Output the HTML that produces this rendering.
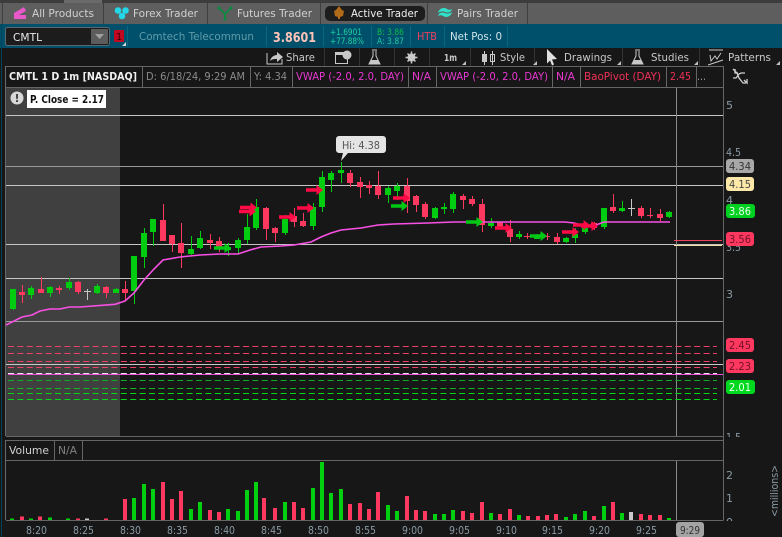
<!DOCTYPE html>
<html><head><meta charset="utf-8"><style>
html,body{margin:0;padding:0;background:#171717;overflow:hidden}
svg{display:block}
text{font-family:"DejaVu Sans","Liberation Sans",sans-serif;font-size:11px}
</style></head><body>
<svg width="782" height="537" viewBox="0 0 782 537" xmlns="http://www.w3.org/2000/svg">
<defs>
<path id="ar" d="M0 -1.700H10.500V-5L17 0L10.500 5V1.700H0z"/>
<clipPath id="c1"><rect x="724" y="425" width="30" height="12"/></clipPath>
<clipPath id="c2"><rect x="724" y="510" width="30" height="11"/></clipPath>
</defs>
<rect width="782" height="537" fill="#171717"/>
<!-- tabs -->
<rect width="782" height="24" fill="#5e5e5e"/>
<rect width="782" height="3" fill="#3c3c3c"/>
<rect x="64" width="38" height="3" fill="#6a6a6a"/>
<path d="M2.500 3V24M103.500 3V24M207.500 3V24M320.500 3V24M427.500 3V24M527.500 3V24" stroke="#3e3e3e"/>
<rect x="325" y="6" width="100" height="15" rx="5" fill="#1d1d1d"/>
<path d="M14 13l10-6 2 4-7 4h7v4H14z" fill="#e858c8"/>
<circle cx="118" cy="10.500" r="3.300" fill="#22d8e8"/><circle cx="125.500" cy="10.500" r="3.300" fill="#22d8e8"/><circle cx="122" cy="16" r="3.300" fill="#22d8e8"/>
<path d="M219 8l6 6 6-6M225 14v5" stroke="#0a8a40" stroke-width="1.800" fill="none"/><circle cx="219" cy="8" r="1.500" fill="#0a8a40"/><circle cx="231" cy="8" r="1.500" fill="#0a8a40"/><circle cx="225" cy="19" r="1.500" fill="#0a8a40"/>
<path d="M339 6l3 4 2 1-1 5-3 1v2h-2v-2l-3-1-1-5 2-1z" fill="#b06a18"/>
<path d="M438 13c1-5 6-6 9-4 2 1 3 1 5 0-1 4-5 4-7 3-2-1-4-1-7 1z" fill="#30e0c8"/><path d="M452 12c-1 5-6 6-9 4-2-1-3-1-5 0 1-4 5-4 7-3 2 1 4 1 7-1z" fill="#30e0c8"/>
<g fill="#d0d0d0">
<text x="32" y="17" textLength="62" lengthAdjust="spacingAndGlyphs">All Products</text>
<text x="133" y="17" textLength="65" lengthAdjust="spacingAndGlyphs">Forex Trader</text>
<text x="237" y="17" textLength="75" lengthAdjust="spacingAndGlyphs">Futures Trader</text>
<text x="351" y="17" textLength="67" lengthAdjust="spacingAndGlyphs" fill="#f0f0f0">Active Trader</text>
<text x="457" y="17" textLength="61" lengthAdjust="spacingAndGlyphs">Pairs Trader</text>
</g>
<!-- blue bar -->
<rect y="24" width="782" height="24" fill="#00506c"/>
<rect x="5.500" y="27.500" width="104" height="18" rx="2" fill="#1c1c1c" stroke="#5a6a70"/>
<rect x="91" y="29" width="17" height="15" fill="#5c5c5c"/>
<path d="M95 34h9l-4.500 5z" fill="#a0a0a0"/>
<text x="13" y="41" textLength="29" lengthAdjust="spacingAndGlyphs" fill="#e8e8e8">CMTL</text>
<rect x="114" y="30" width="10" height="12" rx="1" fill="#c00820"/>
<text x="116" y="40" style="font-size:10px" fill="#400008">1</text>
<path d="M122 46h4v-4z" fill="#d0d8dc"/>
<path d="M127.500 26V47M266.500 26V47M323.500 26V47M371.500 26V47M410.500 26V47M444.500 26V47M507.500 26V47" stroke="#0a6580"/>
<text x="139" y="40" textLength="115" lengthAdjust="spacingAndGlyphs" fill="#5f9ba8">Comtech Telecommun</text>
<text x="273" y="42" textLength="43" lengthAdjust="spacingAndGlyphs" style="font-size:13.500px;font-weight:bold" fill="#ffc4b8">3.8601</text>
<g style="fill:#1fd0a0">
<text x="330" y="35" textLength="32" lengthAdjust="spacingAndGlyphs" style="font-size:9px">+1.6901</text>
<text x="330" y="44" textLength="34" lengthAdjust="spacingAndGlyphs" style="font-size:9px">+77.88%</text>
</g>
<text x="377" y="35" textLength="27" lengthAdjust="spacingAndGlyphs" style="font-size:9px;fill:#10b848">B: 3.86</text>
<text x="377" y="44" textLength="27" lengthAdjust="spacingAndGlyphs" style="font-size:9px;fill:#20c8a0">A: 3.87</text>
<text x="417" y="40" textLength="20" lengthAdjust="spacingAndGlyphs" fill="#f04060">HTB</text>
<text x="450" y="40" textLength="52" lengthAdjust="spacingAndGlyphs" fill="#cfe4ea">Net Pos: 0</text>
<!-- toolbar -->
<path d="M324.500 48V66M359.500 48V66M394.500 48V66M429.500 48V66M470.500 48V66M534.500 48V66M622.500 48V66M699.500 48V66" stroke="#333"/>
<g fill="#c8c8c8">
<path d="M267 53v11h15v-5" stroke="#c8c8c8" fill="none"/><path d="M270 61c1-4 4-6 7-6v-3l6 5-6 5v-3c-3 0-5 0-7 2z"/>
<text x="286" y="61" textLength="29" lengthAdjust="spacingAndGlyphs">Share</text>
<path d="M335.500 52.500h12v11h-12z" stroke="#c8c8c8" fill="none"/><rect x="335" y="52" width="13" height="3"/><circle cx="347" cy="55" r="4.500"/>
<path d="M372 50h5M373 51v5l-4 8h11l-4-8v-5" stroke="#c8c8c8" fill="none"/><path d="M371 60h7l2 4h-11z"/>
<circle cx="411.500" cy="57.500" r="4"/><path d="M411.500 51.500v12M405.500 57.500h12M407.500 53.500l8 8M415.500 53.500l-8 8" stroke="#c8c8c8" stroke-width="1.500"/>
<text x="444" y="61" textLength="13" lengthAdjust="spacingAndGlyphs" style="font-weight:bold;font-size:9.500px">1m</text>
<path d="M462 65h4v-4zM533 65h4v-4zM617 65h4v-4zM694 65h4v-4zM776 65h4v-4z" fill="#c0c0c0"/>
<path d="M484.500 51v14M492.500 51v14" stroke="#c8c8c8"/><rect x="482" y="54" width="5" height="8"/><rect x="490.500" y="54.500" width="4" height="7" fill="none" stroke="#c8c8c8"/>
<text x="500" y="61" textLength="25" lengthAdjust="spacingAndGlyphs">Style</text>
<path d="M547 49l10 10-5 .5 2 5-2 1-2-5-3 3z" fill="#e0e0e0"/>
<text x="564" y="61" textLength="48" lengthAdjust="spacingAndGlyphs">Drawings</text>
<path d="M635 50h5M636 51v5l-4 8h11l-4-8v-5" stroke="#c8c8c8" fill="none"/><path d="M634 60h7l2 4h-11z"/>
<text x="651" y="61" textLength="38" lengthAdjust="spacingAndGlyphs">Studies</text>
<path d="M709 50h14M710 55l1 6 4-5 2 3 4-6M708 65l15-5" stroke="#c8c8c8" fill="none"/>
<text x="728" y="61" textLength="43" lengthAdjust="spacingAndGlyphs">Patterns</text>
</g>
<!-- chart background -->
<rect x="6" y="88" width="114" height="348" fill="#404040"/>
<rect x="1" y="24" width="1" height="513" fill="#00445c"/>
<path d="M5.500 66V436M5.500 440V520" stroke="#6a6a6a"/>
<!-- legend -->
<path d="M5.500 66.500H723.500V520.500M5.500 87.500H723.500M142.500 66V87M250.500 66V87M292.500 66V87M408.500 66V87M436.500 66V87M552.500 66V87M580.500 66V87M666.500 66V87M696.500 66V87" stroke="#666" fill="none"/>
<text x="9" y="80" textLength="128" lengthAdjust="spacingAndGlyphs" style="font-weight:bold" fill="#f0f0f0">CMTL 1 D 1m [NASDAQ]</text>
<text x="146" y="80" textLength="99" lengthAdjust="spacingAndGlyphs" fill="#8a8a8a">D: 6/18/24, 9:29 AM</text>
<text x="254" y="80" textLength="33" lengthAdjust="spacingAndGlyphs" fill="#8a8a8a">Y: 4.34</text>
<g fill="#e838d0">
<text x="296" y="80" textLength="108" lengthAdjust="spacingAndGlyphs">VWAP (-2.0, 2.0, DAY)</text>
<text x="412" y="80" textLength="19" lengthAdjust="spacingAndGlyphs">N/A</text>
<text x="440" y="80" textLength="108" lengthAdjust="spacingAndGlyphs">VWAP (-2.0, 2.0, DAY)</text>
<text x="556" y="80" textLength="19" lengthAdjust="spacingAndGlyphs">N/A</text>
</g>
<g fill="#f03058">
<text x="584" y="80" textLength="77" lengthAdjust="spacingAndGlyphs">BaoPivot (DAY)</text>
<text x="670" y="80" textLength="21" lengthAdjust="spacingAndGlyphs">2.45</text>
</g>
<text x="697" y="80" textLength="9" lengthAdjust="spacingAndGlyphs" fill="#999">...</text>
<path d="M733 69l4 4 2 5 4 5h3M733 78h3l3-4 2-1h4M735 69v4h3M744 80l3 3v-4" stroke="#d0d0d0" stroke-width="1.300" fill="none"/>
<!-- p close -->
<circle cx="17" cy="98" r="6.500" fill="#d8d8d8"/>
<text x="14.500" y="102" style="font-weight:bold;font-size:11px" fill="#404040">!</text>
<rect x="27" y="90" width="79" height="18" fill="#fff"/>
<text x="30" y="103" textLength="74" lengthAdjust="spacingAndGlyphs" style="font-weight:bold;font-size:11px" fill="#111">P. Close = 2.17</text>
<!-- horizontal lines -->
<path d="M6 115.500H723M6 185.500H723M6 244.500H723M6 278.500H723" stroke="#c4c4c4"/>
<path d="M6 166.500H723M6 321.500H723" stroke="#999"/>
<path d="M676.500 88V436M676.500 460V520" stroke="#8a8a8a"/>
<path d="M6 364.500H723" stroke="#c8c8c8"/>
<g stroke-width="1" stroke-dasharray="6 3.400" fill="none">
<path d="M8 346.500H717M8 353.500H717M8 361.500H717M8 367.500H717" stroke="#f04068"/>
<path d="M8 373.500H717" stroke="#e8e8e8"/>
<path d="M8 380.500H717" stroke="#10a828"/>
<path d="M8 388.500H717" stroke="#10b828"/>
<path d="M8 393.500H717M8 399.500H717" stroke="#00d818"/>
</g>
<path d="M8 374.500H723" stroke="#f050e0" stroke-width="1"/>
<!-- candles -->
<path stroke="#00cc10" fill="none" d="M13.500 289V310M31.500 286V299M50.500 286V297M69.500 278V290M97.500 284V294M116.500 288V293M134.500 256V304M144.500 228V268M153.500 219V246M191.500 236V255M200.500 231V249M228.500 243V256M238.500 238V253M247.500 214V244M256.500 199V230M285.500 215V235M313.500 203V230M322.500 171V212M331.500 171V192M341.500 162V183M388.500 186V203M397.500 183V200M435.500 207V219M444.500 203V214M453.500 192V213M491.500 218V228M519.500 231V239M537.500 234V239M566.500 237V243M575.500 228V243M585.500 225V234M604.500 208V229M622.500 201V212M669.500 211V218"/>
<path fill="#00cc10" d="M10 289h6v20h-6zM28 288h6v7h-6zM47 287h6v6h-6zM66 282h6v6h-6zM94 286h6v7h-6zM113 289h6v4h-6zM131 256h6v35h-6zM141 233h6v24h-6zM150 219h6v13h-6zM188 249h6v5h-6zM197 238h6v10h-6zM225 247h6v3h-6zM235 240h6v8h-6zM244 227h6v13h-6zM253 207h6v21h-6zM282 219h6v14h-6zM310 207h6v19h-6zM319 177h6v30h-6zM328 173h6v7h-6zM338 170h6v3h-6zM385 188h6v7h-6zM394 186h6v5h-6zM432 208h6v10h-6zM441 207h6v2h-6zM450 194h6v15h-6zM488 223h6v3h-6zM516 234h6v3h-6zM534 236h6v3h-6zM563 238h6v4h-6zM572 234h6v4h-6zM582 228h6v4h-6zM601 208h6v19h-6zM619 208h6v3h-6zM666 212h6v5h-6z"/>
<path stroke="#ff3860" fill="none" d="M22.500 285V303M41.500 277V293M59.500 286V294M78.500 281V294M106.500 286V298M125.500 281V300M163.500 204V241M172.500 235V252M181.500 223V268M210.500 234V249M219.500 237V252M266.500 207V240M275.500 227V242M294.500 208V227M303.500 213V227M350.500 170V187M360.500 177V198M369.500 181V194M378.500 171V199M407.500 178V213M416.500 195V212M425.500 202V219M463.500 194V209M472.500 196V206M482.500 199V232M500.500 222V228M510.500 220V242M527.500 233V239M547.500 233V240M557.500 233V244M594.500 222V230M613.500 194V213M641.500 206V218M650.500 208V218M660.500 209V221"/>
<path fill="#ff3860" d="M19 292h6v3h-6zM38 289h6v4h-6zM56 288h6v2h-6zM75 282h6v10h-6zM103 287h6v6h-6zM122 289h6v4h-6zM160 220h6v21h-6zM169 235h6v9h-6zM178 243h6v10h-6zM207 240h6v3h-6zM216 241h6v6h-6zM263 208h6v21h-6zM272 228h6v5h-6zM291 216h6v6h-6zM300 221h6v5h-6zM347 173h6v10h-6zM357 182h6v5h-6zM366 185h6v3h-6zM375 186h6v9h-6zM404 186h6v15h-6zM413 196h6v9h-6zM422 204h6v13h-6zM460 196h6v4h-6zM469 199h6v5h-6zM479 204h6v21h-6zM497 222h6v5h-6zM507 229h6v8h-6zM524 236h6v1h-6zM544 236h6v1h-6zM554 237h6v5h-6zM591 223h6v5h-6zM610 207h6v4h-6zM638 208h6v8h-6zM647 215h6v1h-6zM657 214h6v4h-6z"/>
<path stroke="#c8c8c8" fill="none" d="M87.500 289V300M84 291.500H91M631.500 199V216M628 208.500H635"/>
<!-- vwap -->
<polyline fill="none" stroke="#f850e4" stroke-width="1.600" points="6,325 22,317 32,315 40,311 50,309 60,309 69,307 80,307 115,304.300 125,301 134,293 144,280 154,269 163,260 180,257 200,255 220,254 238,254 250,250 261,247 281,246 294,245 311,242 321,237 331,233 341,230 361,228 378,225 394,224 428,223 454,222 565,222 574,223 585,226 596,225 604,222 670,222"/>
<!-- arrows -->
<g fill="#ff0a46">
<use href="#ar" x="240" y="207.500"/><use href="#ar" x="239" y="211.500"/><use href="#ar" x="279" y="217"/><use href="#ar" x="297" y="208"/><use href="#ar" x="306" y="190"/><use href="#ar" x="393" y="198"/><use href="#ar" x="495" y="228"/><use href="#ar" x="562" y="232"/><use href="#ar" x="573" y="225"/><use href="#ar" x="581" y="226"/>
</g>
<g fill="#00c814">
<use href="#ar" x="214" y="248"/><use href="#ar" x="391" y="206"/><use href="#ar" x="466" y="222"/><use href="#ar" x="530" y="236"/>
</g>
<!-- Hi bubble -->
<path d="M339 136h44a3 3 0 0 1 3 3v11a3 3 0 0 1-3 3h-35l-7 8 2-8h-4a3 3 0 0 1-3-3v-11a3 3 0 0 1 3-3z" fill="#e4e4e4"/>
<text x="342" y="149" textLength="38" lengthAdjust="spacingAndGlyphs" fill="#555">Hi: 4.38</text>
<!-- right small lines -->
<path d="M674 240.500H722" stroke="#f04060"/>
<path d="M674 245.500H722" stroke="#f0e0a0"/>
<!-- price axis -->
<g fill="#8a9aa4">
<text x="726" y="109" textLength="7" lengthAdjust="spacingAndGlyphs">5</text>
<text x="726" y="156" textLength="15" lengthAdjust="spacingAndGlyphs">4.5</text>
<text x="726" y="204" textLength="7" lengthAdjust="spacingAndGlyphs">4</text>
<text x="726" y="251" textLength="15" lengthAdjust="spacingAndGlyphs">3.5</text>
<text x="726" y="298" textLength="7" lengthAdjust="spacingAndGlyphs">3</text>
<g clip-path="url(#c1)"><text x="726" y="441" textLength="15" lengthAdjust="spacingAndGlyphs">1.5</text></g>
<text x="726" y="479" textLength="7" lengthAdjust="spacingAndGlyphs">2</text>
<text x="726" y="502" textLength="7" lengthAdjust="spacingAndGlyphs">1</text>
<g clip-path="url(#c2)"><text x="726" y="526" textLength="7" lengthAdjust="spacingAndGlyphs">0</text></g>
</g>
<rect x="726" y="159" width="28" height="14" rx="3" fill="#a8a8a8"/>
<rect x="726" y="177" width="28" height="14" rx="3" fill="#fde8a8"/>
<rect x="726" y="204" width="29" height="14" rx="3" fill="#00d020"/>
<rect x="726" y="232" width="28" height="14" rx="3" fill="#ff3860"/>
<rect x="726" y="338" width="28" height="14" rx="3" fill="#ff3860"/>
<rect x="726" y="359" width="28" height="14" rx="3" fill="#ff3860"/>
<rect x="726" y="380" width="29" height="14" rx="3" fill="#00d820"/>
<g>
<text x="729" y="170" textLength="22" lengthAdjust="spacingAndGlyphs" fill="#333">4.34</text>
<text x="729" y="188" textLength="22" lengthAdjust="spacingAndGlyphs" fill="#444">4.15</text>
<text x="729" y="215" textLength="22" lengthAdjust="spacingAndGlyphs" fill="#e8ffe8">3.86</text>
<text x="729" y="243" textLength="22" lengthAdjust="spacingAndGlyphs" fill="#701028">3.56</text>
<text x="729" y="349" textLength="22" lengthAdjust="spacingAndGlyphs" fill="#701028">2.45</text>
<text x="729" y="370" textLength="22" lengthAdjust="spacingAndGlyphs" fill="#701028">2.23</text>
<text x="729" y="391" textLength="22" lengthAdjust="spacingAndGlyphs" fill="#f0fff0">2.01</text>
</g>
<!-- panel separators -->
<path d="M6 436.500H723M6 440.500H723M6 460.500H723M6 520.500H723" stroke="#666"/>
<path d="M54.500 440V460M82.500 440V460" stroke="#666"/>
<text x="9" y="454" textLength="40" lengthAdjust="spacingAndGlyphs" fill="#d0d0d0">Volume</text>
<text x="58" y="454" textLength="19" lengthAdjust="spacingAndGlyphs" fill="#808080">N/A</text>
<!-- volume -->
<path stroke="#00d010" stroke-width="4" fill="none" d="M12 520v-1.500M31 520v-1.500M50 520v-2.500M68 520v-1.500M134 520v-22M144 520v-36M153 520v-31M191 520v-11M200 520v-18M228 520v-11M238 520v-9M247 520v-30M256 520v-38M285 520v-18M313 520v-32M322 520v-58M331 520v-27M341 520v-31M388 520v-15M397 520v-9M435 520v-6M444 520v-6M453 520v-10M491 520v-7M519 520v-5M566 520v-3M575 520v-6M585 520v-9M604 520v-14M622 520v-7M669 520v-2"/>
<path stroke="#ff3860" stroke-width="4" fill="none" d="M22 520v-3.500M40 520v-3.500M78 520v-1.500M106 520v-1.500M125 520v-21M163 520v-38M172 520v-21M181 520v-29M210 520v-10M219 520v-8M264 520v-22M275 520v-12M294 520v-18M303 520v-12M350 520v-16M360 520v-17M369 520v-11M378 520v-28M407 520v-24M416 520v-10M425 520v-9M463 520v-9M472 520v-7M482 520v-18M500 520v-6M510 520v-11M528 520v-4M538 520v-4M547 520v-5M556 520v-6M594 520v-4M613 520v-18M641 520v-6M650 520v-5M660 520v-5"/>
<path stroke="#c8c8c8" stroke-width="4" fill="none" d="M87 520v-1.500M631 520v-8"/>
<!-- time axis -->
<g fill="#8a9aa4">
<text x="26" y="534" textLength="21" lengthAdjust="spacingAndGlyphs">8:20</text><text x="73" y="534" textLength="21" lengthAdjust="spacingAndGlyphs">8:25</text><text x="120" y="534" textLength="21" lengthAdjust="spacingAndGlyphs">8:30</text><text x="167" y="534" textLength="21" lengthAdjust="spacingAndGlyphs">8:35</text><text x="214" y="534" textLength="21" lengthAdjust="spacingAndGlyphs">8:40</text><text x="261" y="534" textLength="21" lengthAdjust="spacingAndGlyphs">8:45</text><text x="308" y="534" textLength="21" lengthAdjust="spacingAndGlyphs">8:50</text><text x="355" y="534" textLength="21" lengthAdjust="spacingAndGlyphs">8:55</text><text x="402" y="534" textLength="21" lengthAdjust="spacingAndGlyphs">9:00</text><text x="449" y="534" textLength="21" lengthAdjust="spacingAndGlyphs">9:05</text><text x="496" y="534" textLength="21" lengthAdjust="spacingAndGlyphs">9:10</text><text x="542" y="534" textLength="21" lengthAdjust="spacingAndGlyphs">9:15</text><text x="589" y="534" textLength="21" lengthAdjust="spacingAndGlyphs">9:20</text><text x="636" y="534" textLength="21" lengthAdjust="spacingAndGlyphs">9:25</text>
</g>
<rect x="676" y="522" width="28" height="15" rx="3" fill="#a4a4a4"/>
<text x="680" y="534" textLength="20" lengthAdjust="spacingAndGlyphs" fill="#333">9:29</text>
<text transform="translate(778,517) rotate(-90)" textLength="52" lengthAdjust="spacingAndGlyphs" fill="#8a9aa4" x="0" y="0">&lt;millions&gt;</text>
</svg>
</body></html>
